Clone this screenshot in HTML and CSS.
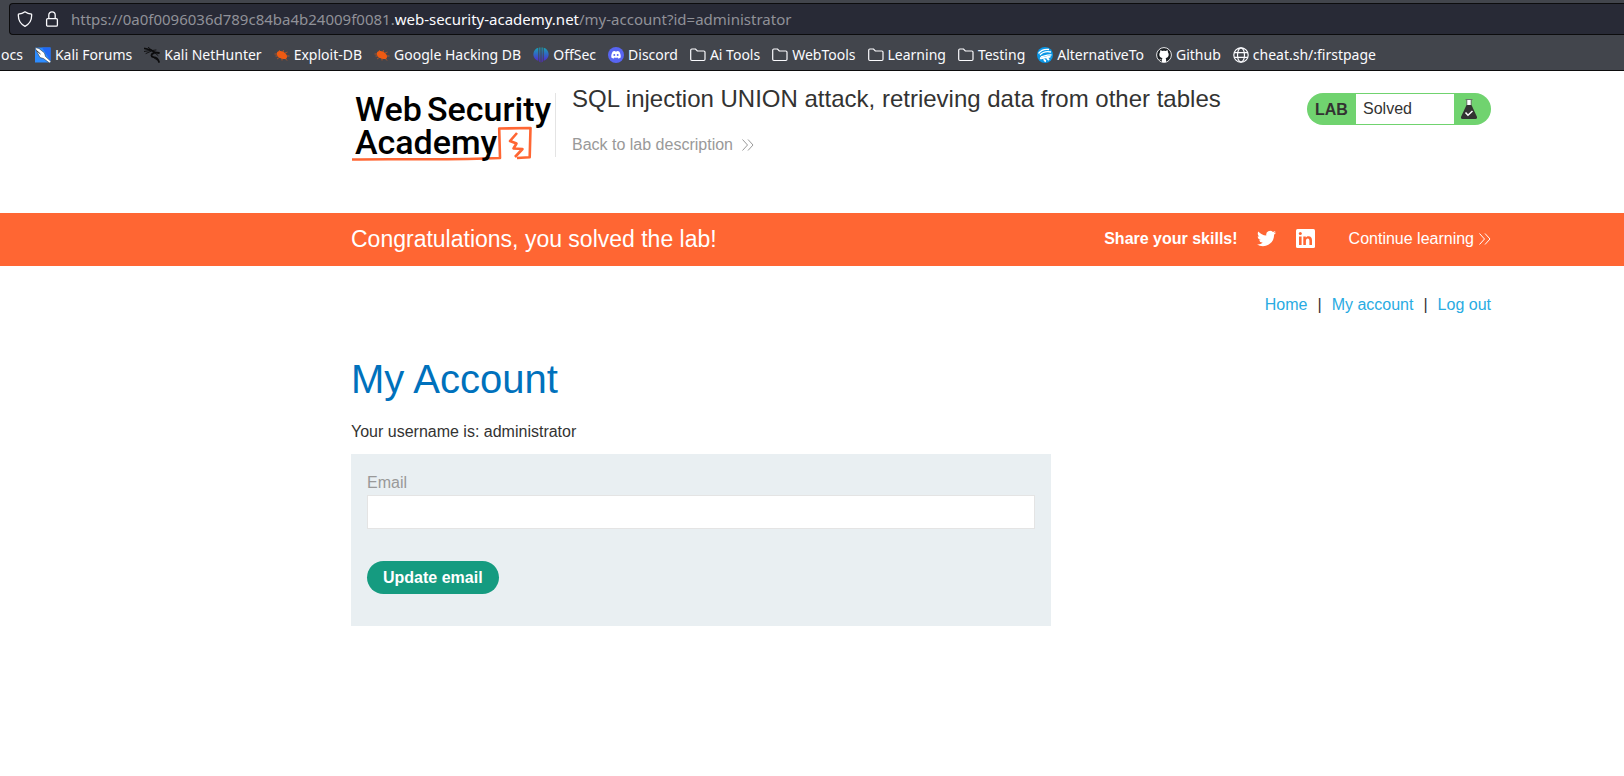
FILE: index.html
```html
<!DOCTYPE html>
<html lang="en">
<head>
<meta charset="utf-8">
<meta name="viewport" content="width=device-width, initial-scale=1">
<title>SQL injection UNION attack, retrieving data from other tables</title>
<link rel="stylesheet" href="styles.css">
</head>
<body>
<div class="browser">
  <div class="address">
    <svg class="address-icon" viewBox="0 0 16 16" fill="none" stroke="#fbfbfe" stroke-width="1.3" stroke-linejoin="round" aria-hidden="true"><path d="M8 .8c2 1.500 4.200 2.200 6.600 2.400.4 5.200-1.600 9.600-6.600 12.100C3 12.800 1 8.400 1.400 3.200 3.800 3 6 2.300 8 .8z"/></svg>
    <svg class="address-icon" viewBox="0 0 16 16" fill="none" stroke="#fbfbfe" stroke-width="1.3" aria-hidden="true"><rect x="2.600" y="7.600" width="10.800" height="7.600" rx="1.200"/><path d="M4.800 7.500V4a3.200 3.200 0 0 1 6.400 0v3.500"/></svg>
    <span class="url">https://0a0f0096036d789c84ba4b24009f0081.<span class="url-host">web-security-academy.net</span>/my-account?id=administrator</span>
  </div>
  <nav class="bookmarks" aria-label="Bookmarks">
    <a class="bookmark" href="#">ocs</a>
    <a class="bookmark" href="#"><svg class="favicon" viewBox="0 0 16 16" aria-hidden="true"><path fill="#2d8cff" d="M0 .5h15.500v15H0z"/><path fill="#2068f5" d="M7 .5h8.500V14z"/><path fill="#fff" stroke="#222" stroke-width=".5" d="M0 .5 4 1.500 9.500 6l1 3.500 5.500 5-1.500 1.500-6-4.500-3.500-1L1.500 4z"/><path stroke="#333" d="m1.500 3.500 4 3.500"/></svg>Kali Forums</a>
    <a class="bookmark" href="#"><svg class="favicon" viewBox="0 0 16 16" fill="none" stroke="#0b0b0c" stroke-linecap="round" aria-hidden="true"><path stroke-width="1.800" d="M.8 1.500 7 3l4 2.500 4 .5M10 6c-3 .5-3.500 3.500-.5 4.200 3 .3 4.500 1.500 5.500 4.800"/><path stroke-width=".9" d="M0 4.500 6 3.500M2 6.500 7.500 4M4 0l4 3.500 4-.5M10 5l4 3.500M9 10l4 3"/></svg>Kali NetHunter</a>
    <a class="bookmark" href="#"><svg class="favicon" viewBox="0 0 16 16" aria-hidden="true"><path fill="#ee5a12" d="M3 5.500C5 3 9.500 4 12 7c2.200 3 .8 5.500-2.500 5C5.500 11.500 2 9 3 5.500z"/><path fill="none" stroke="#ee5a12" stroke-width=".6" d="M.5 7h4M1.500 9h4M3 12l3-2M5 3l2 2M9.500 3 9 5M11 6l2.500-1M12 9h3.500M11 11l2 2.500M8 11v2.500"/></svg>Exploit-DB</a>
    <a class="bookmark" href="#"><svg class="favicon" viewBox="0 0 16 16" aria-hidden="true"><path fill="#ee5a12" d="M3 5.500C5 3 9.500 4 12 7c2.200 3 .8 5.500-2.500 5C5.500 11.500 2 9 3 5.500z"/><path fill="none" stroke="#ee5a12" stroke-width=".6" d="M.5 7h4M1.500 9h4M3 12l3-2M5 3l2 2M9.500 3 9 5M11 6l2.500-1M12 9h3.500M11 11l2 2.500M8 11v2.500"/></svg>Google Hacking DB</a>
    <a class="bookmark" href="#"><svg class="favicon" viewBox="0 0 16 16" aria-hidden="true"><defs><linearGradient id="offsec" gradientUnits="userSpaceOnUse" x1="0" y1="0" x2="0" y2="16"><stop stop-color="#15a9b5"/><stop offset=".5" stop-color="#3461c4"/><stop offset="1" stop-color="#5a18d6"/></linearGradient></defs><path fill="url(#offsec)" d="M5.300.8v13C1.500 12.500.2 9.500.4 6.800.6 4 2.500 1.500 5.300.8zM10.700.8v13c3.800-1.300 5.100-4.300 4.900-7-.2-2.800-2.100-5.300-4.900-6zM6.300.5h1.100v15l-1.100-1zM8.600.5h1.100v14l-1.100 1z"/></svg>OffSec</a>
    <a class="bookmark" href="#"><svg class="favicon" viewBox="0 0 16 16" aria-hidden="true"><circle cx="8" cy="8" r="8" fill="#5865f2"/><path fill="#fff" d="M4.800 4.600c1-.6 1.600-.7 2.200-.7l.3.600h1.400l.3-.6c.6 0 1.200.1 2.200.7 1.100 1.700 1.700 3.600 1.500 5.800-.9.700-1.700 1-2.500 1.100l-.6-1c-1 .3-2.200.3-3.200 0l-.6 1c-.8-.1-1.600-.4-2.500-1.100-.2-2.200.4-4.100 1.500-5.800z"/><circle cx="6.300" cy="8" r="1" fill="#5865f2"/><circle cx="9.700" cy="8" r="1" fill="#5865f2"/></svg>Discord</a>
    <a class="bookmark" href="#"><svg class="favicon" viewBox="0 0 16 16" aria-hidden="true"><use href="#folder"/></svg>Ai Tools</a>
    <a class="bookmark" href="#"><svg class="favicon" viewBox="0 0 16 16" aria-hidden="true"><use href="#folder"/></svg>WebTools</a>
    <a class="bookmark" href="#"><svg class="favicon" viewBox="0 0 16 16" aria-hidden="true"><use href="#folder"/></svg>Learning</a>
    <a class="bookmark" href="#"><svg class="favicon" viewBox="0 0 16 16" aria-hidden="true"><defs><path id="folder" d="M.7 3.200c0-.7.500-1.200 1.200-1.200h3.600l1.800 2h6.500c.7 0 1.200.5 1.200 1.200v7.100c0 .7-.5 1.200-1.200 1.200H1.900c-.7 0-1.200-.5-1.200-1.200z" fill="none" stroke="#fbfbfe" stroke-width="1.200"/></defs><use href="#folder"/></svg>Testing</a>
    <a class="bookmark" href="#"><svg class="favicon" viewBox="0 0 16 16" fill="none" aria-hidden="true"><circle cx="8" cy="8" r="8" fill="#0b96e5"/><path stroke="#fff" stroke-width="1.300" d="M1.500 6.500C4 3 8 2 12 2.500M3 8c3-3.500 6-4 11-3M4 9.500c2 .8 6-2.500 10.500-1.500"/><path stroke="#fff" stroke-width="2" d="M3 11c4 1 7-2 10.500-1.200M7.500 12c-.5 1 .5 2 1.500 2.200M10 11l2 2"/></svg>AlternativeTo</a>
    <a class="bookmark" href="#"><svg class="favicon" viewBox="0 0 16 16" aria-hidden="true"><circle cx="8" cy="8" r="7.400" fill="#1b1f23" stroke="#e8e8ea"/><path fill="#fff" d="M4.300 3.200c.8 0 1.500.4 2 .8 1.100-.3 2.300-.3 3.400 0 .5-.4 1.200-.8 2-.8.300.7.300 1.300.1 1.900.6.700.9 1.500.9 2.400 0 2.300-1.300 3.200-3.100 3.500.4.500.5 1 .5 1.600v2.600H6v-2C4.500 13.500 4 12.500 3.300 12c1-.3 1.600 1 2.700.7 0-.7.100-1.200.5-1.700C4.700 10.700 3.300 9.800 3.300 7.500c0-.9.300-1.700.9-2.400-.2-.6-.2-1.200.1-1.900z"/></svg>Github</a>
    <a class="bookmark" href="#"><svg class="favicon" viewBox="0 0 16 16" fill="none" stroke="#fbfbfe" stroke-width="1.200" aria-hidden="true"><circle cx="8" cy="8" r="7.200"/><ellipse cx="8" cy="8" rx="3.500" ry="7.200"/><path d="M1.200 5.700h13.600M1.200 10.300h13.600"/></svg>cheat.sh/:firstpage</a>
  </nav>
</div>

<header class="page-grid lab-header">
  <div class="lab-head">
    <a class="logo" href="#" aria-label="Web Security Academy">
      <svg class="logo-art" viewBox="0 0 200 74" aria-hidden="true">
        <path fill="none" stroke="#f63" stroke-width="2.600" stroke-linejoin="round" d="M1 66.500c45-1 95 1 148-1.500l-.8-29.500 31.300-.5-.8 29.300L166 65"/>
        <path fill="none" stroke="#f63" stroke-width="2.600" stroke-linejoin="round" d="m166 40-7 8 6.500 2.500-3 5 9 .5-7.500 8"/>
        <g class="logo-text"><text x="4" y="28">Web</text><text x="76" y="28">Security</text><text x="4" y="61">Academy</text></g>
      </svg>
    </a>
    <div class="lab-title">
      <h2 class="title">SQL injection UNION attack, retrieving data from other tables</h2>
      <a class="back" href="#">Back to lab description<svg class="arrows" viewBox="0 0 12 12" aria-hidden="true"><path d="m.5.500 5 5.500-5 5.500M6 .5 11 6l-5 5.500"/></svg></a>
    </div>
    <div class="status">
      <span class="status-lab">LAB</span>
      <span class="status-text">Solved</span>
      <svg class="flask" viewBox="0 0 16 20" aria-hidden="true"><path fill="#fff" d="M6 1h4v6H6z"/><path fill="none" stroke="#6b756b" d="M4.500.5h7M5.800 1v5M10.200 1v5"/><path fill="#333332" d="M5.500 6h5l5.300 11.500c.6 1.500.1 2.500-1.300 2.500h-13C.1 20-.4 19 .2 17.500z"/><path fill="none" stroke="#fff" stroke-width="1.500" d="m4.500 13.500 2.500 2.700 4.500-4.200"/></svg>
    </div>
  </div>
</header>

<section class="page-grid banner">
  <div class="banner-row">
    <h4 class="congrats">Congratulations, you solved the lab!</h4>
    <span class="share">Share your skills!</span>
    <a class="social" href="#" aria-label="Twitter"><svg viewBox="0 0 24 24" fill="#fff" aria-hidden="true"><path d="M23.950 4.570a10 10 0 0 1-2.820.770 4.960 4.960 0 0 0 2.160-2.720c-.950.550-2 .950-3.130 1.180a4.920 4.920 0 0 0-8.380 4.480C7.690 8.100 4.070 6.130 1.640 3.160a4.820 4.820 0 0 0-.670 2.480c0 1.710.870 3.210 2.190 4.100a4.900 4.900 0 0 1-2.230-.620v.060a4.920 4.920 0 0 0 3.950 4.830 5 5 0 0 1-2.210.080 4.940 4.940 0 0 0 4.600 3.420A9.870 9.870 0 0 1 0 19.540 13.990 13.990 0 0 0 7.550 21.750c9.050 0 14-7.500 14-13.980 0-.210 0-.420-.020-.630a9.940 9.940 0 0 0 2.460-2.550z"/></svg></a>
    <a class="social" href="#" aria-label="LinkedIn"><svg viewBox="0 0 19 19" aria-hidden="true"><rect width="19" height="19" rx="1.500" fill="#fff"/><path fill="#f63" d="M3 7.500h2.600V16H3zM7.300 7.500h2.500v1.200c.4-.7 1.300-1.400 2.600-1.400 2.700 0 3.600 1.600 3.600 4.300V16h-2.600v-4c0-1.500-.4-2.400-1.600-2.400-1.300 0-1.900.9-1.900 2.400v4H7.300z"/><circle cx="4.300" cy="4.500" r="1.500" fill="#f63"/></svg></a>
    <a class="continue" href="#">Continue learning<svg class="arrows" viewBox="0 0 12 12" aria-hidden="true"><path d="m.5.500 5 5.500-5 5.500M6 .5 11 6l-5 5.500"/></svg></a>
  </div>
</section>

<main class="page-grid">
  <div class="content">
    <nav class="top-links" aria-label="Account"><a href="#">Home</a><span>|</span><a href="#">My account</a><span>|</span><a href="#">Log out</a></nav>
    <h1 class="heading">My Account</h1>
    <p class="username">Your username is: administrator</p>
    <form class="email-form">
      <label class="email-label" for="email">Email</label>
      <input class="email-input" id="email" type="email" name="email">
      <button class="submit" type="button">Update email</button>
    </form>
  </div>
</main>
</body>
</html>
```
FILE: styles.css
```css
* { box-sizing: border-box; }

body {
  margin: 0;
  background: #fff;
  color: #333332;
  font: 16px/24px "Liberation Sans", Arial, sans-serif;
}

a { text-decoration: none; }
svg { display: block; flex: none; }

/* Browser toolbar */
.browser {
  background: #42454c;
  border-bottom: 1px solid #0c0c0d;
  color: #fbfbfe;
  font-family: "Noto Sans", sans-serif;
  font-size: 15px;
  overflow: hidden;
}

.address {
  display: flex;
  align-items: center;
  gap: 11px;
  height: 32px;
  margin: 3px 0 0 9px;
  padding-left: 7px;
  background: #282a36;
  border: 1px solid #0c0c0d;
  border-right: 0;
  border-radius: 4px 0 0 4px;
}

.address-icon { width: 16px; height: 16px; }
.url { color: #909198; white-space: nowrap; }
.url-host { color: #fbfbfe; }

.bookmarks {
  display: flex;
  align-items: center;
  gap: 12px;
  height: 35px;
  padding: 4px 0 0 1px;
  font-size: 14px;
}

.bookmark {
  display: flex;
  align-items: center;
  gap: 4px;
  color: #fbfbfe;
  white-space: nowrap;
}

.favicon { width: 16px; height: 16px; }

/* Page column */
.page-grid {
  display: grid;
  grid-template-columns: minmax(16px, 351fr) minmax(0, 1140px) minmax(16px, 133fr);
}

.page-grid > * { grid-column: 2; }

/* Lab header */
.lab-header { padding: 22px 0 46px; }
.lab-head { display: flex; align-items: flex-start; }
.logo-art { width: 200px; height: 74px; overflow: visible; }

.logo-text {
  fill: #000;
  font-family: Roboto, sans-serif;
  font-size: 34px;
  font-weight: 500;
}

.lab-title {
  flex: 1;
  min-height: 62px;
  margin-left: 4px;
  padding-left: 16px;
  border-left: 1px solid #e4e4e4;
}

.title { margin: -8px 0 20px; font-size: 24px; font-weight: 400; line-height: 28px; }

.back {
  display: inline-flex;
  align-items: center;
  gap: 9px;
  color: #999;
}

.arrows { width: 12px; height: 12px; fill: none; stroke: currentColor; }

.status {
  display: flex;
  align-items: center;
  width: 184px;
  height: 32px;
  padding: 1px 14px 1px 8px;
  border-radius: 16px;
  background: #70d36f;
}

.status-lab { width: 41px; padding-top: 2px; font-weight: 700; }
.status-text { flex: 1; margin-right: 7px; padding-left: 7px; background: #fff; line-height: 30px; }
.flask { width: 16px; height: 20px; }

/* Solved banner */
.banner { background: #f63; color: #fff; }
.banner-row { display: flex; align-items: center; height: 53px; padding-bottom: 2px; }
.congrats { flex: 1; margin: 0; font-size: 23px; font-weight: 400; }
.share { margin-right: 19px; font-weight: 700; }
.social { width: 19px; margin-right: 20px; }
.continue { display: flex; align-items: center; gap: 5px; margin-left: 14px; color: #fff; }

/* Account page */
.top-links { display: flex; justify-content: flex-end; gap: 10px; padding-top: 27px; }
.top-links a { color: #29abe2; }
.heading { margin: 40px 0 19px; color: #0071bc; font-size: 40px; font-weight: 400; line-height: 44px; }
.username { margin: 0 0 10px; }

.email-form {
  display: flex;
  flex-direction: column;
  align-items: flex-start;
  max-width: 700px;
  padding: 17px 16px 32px;
  background: #e9eff2;
}

.email-label { color: #999; }
.email-input {
  width: 100%;
  height: 34px;
  margin-bottom: 32px;
  padding: 0 8px;
  border: 1px solid #e4e4e4;
  background: #fff;
  font: inherit;
}

.submit {
  height: 33px;
  padding: 0 16px;
  border: 0;
  border-radius: 17px;
  background: #159b80;
  color: #fff;
  font: inherit;
  font-weight: 700;
}
```
